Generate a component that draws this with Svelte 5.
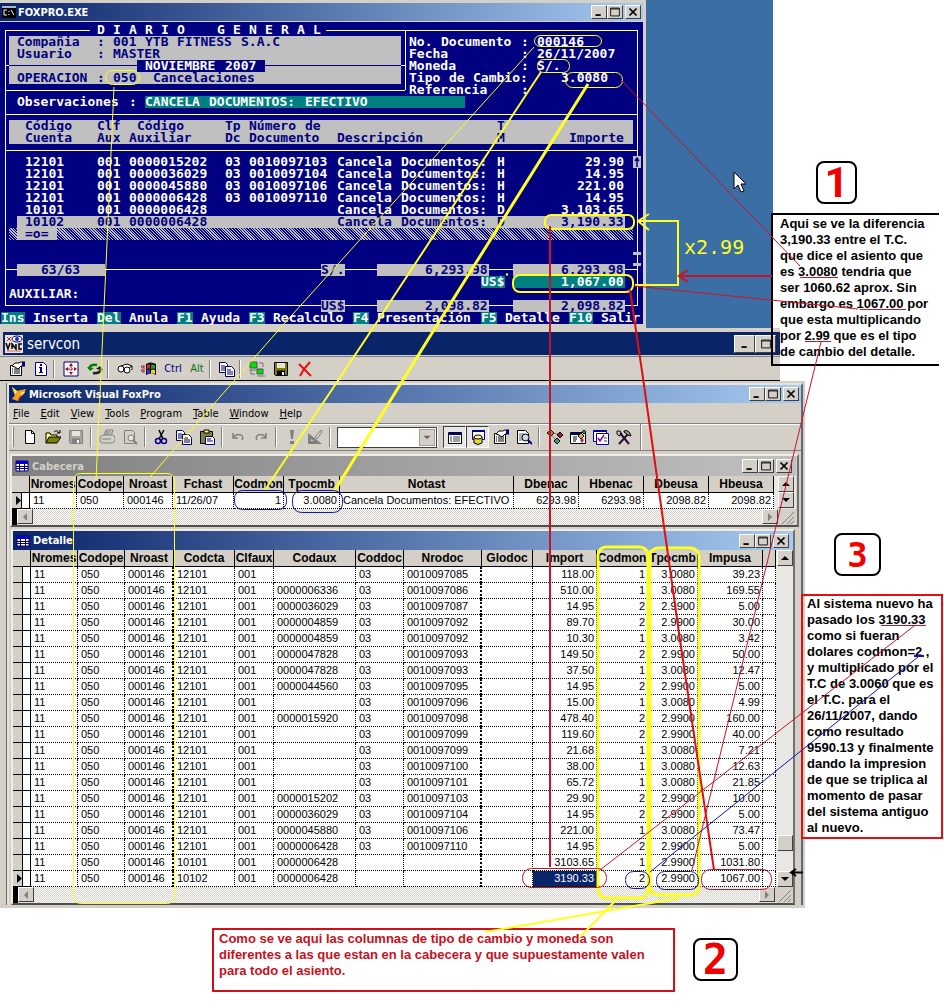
<script>
  // Console screen: an 80 x 25 character grid. Each run is [column, text, tone, width].
  const gray = 'gray';
  const teal = 'teal';
  const entries = [
    ['12101', '0000015202', '0010097103', 'H', '29.90'],
    ['12101', '0000036029', '0010097104', 'H', '14.95'],
    ['12101', '0000045880', '0010097106', 'H', '221.00'],
    ['12101', '0000006428', '0010097110', 'H', '14.95'],
    ['10101', '0000006428', '', 'D', '3,103.65'],
    ['10102', '0000006428', '', 'D', '3,190.33'],
  ];
  const entryRow = ([cuenta, aux, doc, tm, amount], i) => {
    const tone = i === 5 ? 'ink' : '';
    const runs = [];
    if (i === 5) runs.push([2, '', gray, 76]);
    runs.push([3, cuenta, tone], [12, '001', tone], [16, aux, tone]);
    if (doc) runs.push([28, '03', tone], [31, doc, tone]);
    runs.push([42, 'Cancela', tone], [50, 'Documentos:', tone], [62, tm, tone], [78 - amount.length, amount, tone]);
    return runs;
  };
  const spaced = (word, start) => [...word].map((ch, i) => [start + i * 2, ch]);
  const screen = [
    [...spaced('DIARIO', 12), ...spaced('GENERAL', 27)],
    [[1, '', gray, 49], [2, 'Compañia', 'ink'], [12, ':', 'ink'], [14, '001', 'ink'], [18, 'YTB', 'ink'], [22, 'FITNESS', 'ink'], [30, 'S.A.C', 'ink'], [51, 'No.'], [55, 'Documento'], [65, ':'], [67, '000146']],
    [[1, '', gray, 49], [2, 'Usuario', 'ink'], [12, ':', 'ink'], [14, 'MASTER', 'ink'], [51, 'Fecha'], [65, ':'], [67, '26/11/2007']],
    [[1, '', gray, 49], [1, '', 'rule', 49], [17, '', 'navy', 16], [18, 'NOVIEMBRE'], [28, '2007'], [51, 'Moneda'], [65, ':'], [67, 'S/.']],
    [[1, '', gray, 49], [2, 'OPERACION', 'ink'], [12, ':', 'ink'], [14, '050', 'ink'], [19, 'Cancelaciones', 'ink'], [51, 'Tipo'], [56, 'de'], [59, 'Cambio:'], [70, '3.0080']],
    [[51, 'Referencia'], [65, ':']],
    [[2, 'Observaciones'], [16, ':'], [18, '', teal, 40], [18, 'CANCELA'], [26, 'DOCUMENTOS:'], [38, 'EFECTIVO']],
    [],
    [[1, '', gray, 78], [3, 'Código', 'ink'], [12, 'Clf', 'ink'], [17, 'Código', 'ink'], [28, 'Tp', 'ink'], [31, 'Número', 'ink'], [38, 'de', 'ink'], [62, 'T', 'ink']],
    [[1, '', gray, 78], [3, 'Cuenta', 'ink'], [12, 'Aux', 'ink'], [16, 'Auxiliar', 'ink'], [28, 'Dc', 'ink'], [31, 'Documento', 'ink'], [42, 'Descripción', 'ink'], [62, 'M', 'ink'], [71, 'Importe', 'ink']],
    [],
    ...entries.map(entryRow),
    [[1, '', 'hatch', 78], [2, '', gray, 5], [3, '=o=', 'ink']],
    [],
    [],
    [[2, '', gray, 11], [5, '63/63', 'ink'], [40, 'S/.', 'gray ink'], [47, '', gray, 14], [53, '6,293.98', 'ink'], [64, '', gray, 14], [70, '6,293.98', 'ink']],
    [[60, 'US$', teal], [64, '', teal, 14], [70, '1,067.00']],
    [[1, 'AUXILIAR:']],
    [[40, 'US$', 'gray ink'], [47, '', gray, 14], [53, '2,098.82', 'ink'], [64, '', gray, 14], [70, '2,098.82', 'ink']],
    [[0, 'Ins', teal], [4, 'Inserta'], [12, 'Del', teal], [16, 'Anula'], [22, 'F1', teal], [25, 'Ayuda'], [31, 'F3', teal], [34, 'Recalculo'], [44, 'F4', teal], [47, 'Presentación'], [60, 'F5', teal], [63, 'Detalle'], [71, 'F10', teal], [75, 'Salir']],
  ];

  const menus = ['File', 'Edit', 'View', 'Tools', 'Program', 'Table', 'Window', 'Help'];

  const headCols = [18, 47, 47, 49, 61, 50, 56, 174, 65, 65, 65, 65];
  const headNames = ['', 'Nromes', 'Codope', 'Nroast', 'Fchast', 'Codmon', 'Tpocmb', 'Notast', 'Dbenac', 'Hbenac', 'Dbeusa', 'Hbeusa'];
  const headRow = ['11', '050', '000146', '11/26/07', '1', '3.0080', 'Cancela Documentos: EFECTIVO', '6293.98', '6293.98', '2098.82', '2098.82'];
  const headRight = [4, 5, 7, 8, 9, 10];

  const detCols = [18, 47, 47, 49, 61, 39, 82, 48, 78, 51, 64, 51, 50, 65, 13];
  const detNames = ['', 'Nromes', 'Codope', 'Nroast', 'Codcta', 'Clfaux', 'Codaux', 'Coddoc', 'Nrodoc', 'Glodoc', 'Import', 'Codmon', 'Tpocmb', 'Impusa', ''];
  const detail = [
    ['', '7085', '118.00', '1', '39.23'],
    ['0000006336', '7086', '510.00', '1', '169.55'],
    ['0000036029', '7087', '14.95', '2', '5.00'],
    ['0000004859', '7092', '89.70', '2', '30.00'],
    ['0000004859', '7092', '10.30', '1', '3.42'],
    ['0000047828', '7093', '149.50', '2', '50.00'],
    ['0000047828', '7093', '37.50', '1', '12.47'],
    ['0000044560', '7095', '14.95', '2', '5.00'],
    ['', '7096', '15.00', '1', '4.99'],
    ['0000015920', '7098', '478.40', '2', '160.00'],
    ['', '7099', '119.60', '2', '40.00'],
    ['', '7099', '21.68', '1', '7.21'],
    ['', '7100', '38.00', '1', '12.63'],
    ['', '7101', '65.72', '1', '21.85'],
    ['0000015202', '7103', '29.90', '2', '10.00'],
    ['0000036029', '7104', '14.95', '2', '5.00'],
    ['0000045880', '7106', '221.00', '1', '73.47'],
    ['0000006428', '7110', '14.95', '2', '5.00'],
    ['0000006428', '', '3103.65', '1', '1031.80'],
    ['0000006428', '', '3190.33', '2', '1067.00'],
  ].map(([aux, doc, imp, mon, usa], i) => [
    '11', '050', '000146', i === 18 ? '10101' : i === 19 ? '10102' : '12101', '001', aux,
    doc ? '03' : '', doc ? '001009' + doc : '', '', imp, mon,
    mon === '2' || i === 18 ? '2.9900' : '3.0080', usa, '',
  ]);

  const page = '<path d="M3.5 1.500h6l3 3v10h-9z" fill="#fff" stroke="#000"/><path d="M9.500 1.500v3h3" fill="none" stroke="#000"/>';
  const copy = '<path d="M.5 1.500h6l2 2v8h-8z" fill="#fff" stroke="#000060"/><path d="M2 5h4M2 7h4M2 9h4" stroke="#000060"/><path d="M6.500 5.500h6l3 3v7h-9z" fill="#fff" stroke="#000060"/><path d="M8 9h4M8 11h6M8 13h6" stroke="#000060"/>';
  const props = '<path d="M1.500 4.500h11v10h-11z" fill="#fff" stroke="#000"/><path d="M3 8h1M5 8h6M3 10h1M5 10h6M3 12h1M5 12h6" stroke="#000"/><path d="M3 5l3-3h4l2-1h4v4h-4l-3 3-3-2z" fill="#fff" stroke="#000"/><path d="M13 1h3v4h-3z" fill="#000080"/>';
  const disk = (body, ink) => `<path d="M1.500 1.500h13v13h-12l-1-1z" fill="${body}" stroke="${ink}"/><path d="M4 2h8v5h-8z" fill="#e8e4dc"/><path d="M4 9.500h8v5h-8z" fill="${ink}"/><path d="M9 11h2v3h-2z" fill="#fff"/>`;
  const icons = {
    page, copy, props,
    info: '<path d="M2.500 1.500h8l3 3v10h-11z" fill="#fff" stroke="#000080"/><path d="M7 3h2v2h-2zM6 6h3v5h1v1h-4v-1h1v-4h-1z" fill="#000080"/>',
    full: '<path d="M1 1h14v14h-14z" fill="#fff" stroke="#000080"/><path d="M8 2l2 3h-4zM8 14l2-3h-4zM2 8l3-2v4zM14 8l-3-2v4z" fill="#b00020"/><path d="M8 5v6M5 8h6" stroke="#b00020" stroke-dasharray="2 1"/>',
    refresh: '<path d="M2 8q1-5 8-4" fill="none" stroke="#008000" stroke-width="2.500"/><path d="M0 6l3 4 4-3z" fill="#008000"/><path d="M14 8q-1 5-8 4" fill="none" stroke="#202020" stroke-width="2.500"/><path d="M16 9l-3-4-4 3z" fill="#003000"/>',
    view: '<g fill="#fff" stroke="#000"><path d="M4 5l6-2 5 2v4"/><ellipse cx="4" cy="8" rx="3" ry="3"/><ellipse cx="10" cy="9" rx="3" ry="3"/><path d="M6 8l2 1M12 7l3-2"/></g>',
    win: '<path d="M5 3q4-3 10 0v11q-5-3-10 0z" fill="#000"/><path d="M6 4q2-2 3 0v4q-1-1-3 0z" fill="#e02020"/><path d="M10 4q2-1 4 0v4q-2-1-4 0z" fill="#20a020"/><path d="M6 9q2-1 3 0v4q-1-1-3 0z" fill="#2040e0"/><path d="M10 9q2-1 4 0v4q-2-1-4 0z" fill="#f0d020"/><path d="M0 5h4M1 7h3M0 9h4M1 11h3" stroke="#c02020"/><path d="M0 6h4M0 10h4" stroke="#2020a0" stroke-dasharray="1 1"/>',
    net: '<path d="M1 1h7v6h-7zM8 8h6v5h-6z" fill="#00e000" stroke="#505050"/><path d="M10 2h4v4M2 9v4h4M8 15h8M0 9h8" fill="none" stroke="#707070"/>',
    disk: disk('#808000', '#000'),
    diskOff: disk('#a8a49c', '#808080'),
    close: '<path d="M2 3l5 5 7 7M13 1l-6 7-4 7" fill="none" stroke="#e81010" stroke-width="2"/>',
    open: '<path d="M1 14v-10h4l1 2h6v3" fill="#ffff80" stroke="#000"/><path d="M1 14l3-6h12l-4 6z" fill="#808000" stroke="#000"/><path d="M9 3q3-3 5 1M15 1v3h-3" fill="none" stroke="#000"/>',
    print: '<g fill="#d4d0c8" stroke="#808080"><path d="M5 7l2-6h7l-2 6z"/><path d="M1 8l3-2h10l2 2v4l-3 2h-10l-2-2z"/><path d="M3 10h9M7 3h5M6 5h5"/></g>',
    preview: '<g fill="none" stroke="#808080"><path d="M2.500 1.500h8l2 2v11h-10z"/><circle cx="9" cy="9" r="3" fill="#e8e4dc"/><path d="M11 11l4 4" stroke-width="2"/></g>',
    find: '<path d="M1.500 1.500h8l3 3v10h-11z" fill="#fff" stroke="#000"/><path d="M3 5h5M3 7h3M3 9h3M3 11h3" stroke="#606060"/><circle cx="9.500" cy="8.500" r="3.500" fill="#c8dce8" stroke="#000"/><path d="M12 11l4 4" stroke="#000080" stroke-width="2"/>',
    cut: '<path d="M6 1l4 9M11 1l-5 9" stroke="#000" fill="none" stroke-width="1.500"/><circle cx="5" cy="12" r="2.500" fill="none" stroke="#000080" stroke-width="1.500"/><circle cx="11" cy="12" r="2.500" fill="none" stroke="#000080" stroke-width="1.500"/>',
    paste: '<path d="M1.500 2.500h12v12h-12z" fill="#808040" stroke="#000"/><path d="M5 1h5v3h-5z" fill="#ffff60" stroke="#000"/><path d="M6.500 7.500h7l2 2v6h-9z" fill="#fff" stroke="#000080"/><path d="M8 10h4M8 12h6" stroke="#000080"/>',
    undo: '<path d="M3 4v5h5M3 9q3-5 8-3 3 2 1 5" fill="none" stroke="#808080" stroke-width="1.500"/>',
    redo: '<path d="M13 4v5h-5M13 9q-3-5-8-3-3 2-1 5" fill="none" stroke="#808080" stroke-width="1.500"/>',
    run: '<path d="M6 1h4l-1 9h-2zM6 12h4v3h-4z" fill="#808080"/>',
    modify: '<path d="M1 4v11h14zM4 10v2h3z" fill="#808080" fill-rule="evenodd"/><path d="M8 8l6-7 1 2-5 7z" fill="#d4d0c8" stroke="#808080"/>',
    form: '<path d="M1.500 3.500h13v11h-13z" fill="#fff" stroke="#000"/><path d="M1 4h14v2h-14z" fill="#000080"/><path d="M3 8h2M6 8h7M3 10h2M6 10h7M3 12h2M6 12h7" stroke="#404040"/>',
    data: '<path d="M2.500 1.500h12v9h-12z" fill="#fff" stroke="#000080"/><path d="M2 1h13v2h-13z" fill="#000080"/><path d="M4 8v6q4 3 8 0v-6z" fill="#e0d840" stroke="#000"/><ellipse cx="8" cy="8" rx="4" ry="2" fill="#ffff90" stroke="#000"/>',
    tree: '<path d="M4 4l8 1M4 5l6 8" stroke="#808080"/><path d="M4 1l3 3-3 3-4-3z" fill="#d08020" stroke="#000"/><path d="M13 3l3 3-3 3-3-3z" fill="#a01040" stroke="#000"/><path d="M10 9l3 3-3 3-3-3z" fill="#30a090" stroke="#000"/>',
    wizard: '<path d="M.5 3.500h15v11h-15z" fill="#fff" stroke="#000"/><path d="M1 4h9v2h-9z" fill="#000080"/><path d="M3 8h4M3 10h4M3 12h3" stroke="#000"/><path d="M8 7l3-3 3 3-3 3z" fill="#e0b030" stroke="#000"/><path d="M12 3l2-2 2 2-2 2z" fill="#30a090" stroke="#000"/><path d="M12 9l2 2-2 3-2-3z" fill="#c02040"/>',
    tasks: '<path d="M.5 1.500h13v11h-13z" fill="#fff" stroke="#0000a0"/><path d="M3.500 4.500h12v11h-12z" fill="#fff" stroke="#0000a0"/><path d="M1 1h13v2h-13z" fill="#0000a0"/><path d="M5 9l2 3 4-6" fill="none" stroke="#8000a0" stroke-width="1.500"/><path d="M11 9h3M11 12h3" stroke="#404040"/>',
    tools: '<path d="M3 15l9-10M4 4l9 11" stroke="#301030" stroke-width="2"/><path d="M1 2h3l2 3-3 2-2-2z" fill="none" stroke="#000"/><path d="M8 2q5-2 7 5l-3-1-4-3z" fill="#a09890" stroke="#000"/>',
    cross: '<path d="M4 4l8 8M12 4l-8 8" stroke="#000" stroke-width="2"/>',
    box: '<path d="M3 3.500h10v9h-10z" fill="none" stroke="#000"/><path d="M3 4.500h10" stroke="#000"/>',
    min: '<path d="M4 11.500h6" stroke="#000" stroke-width="2"/>',
    up: '<path d="M4 10h8l-4-4z" fill="#000"/>',
    down: '<path d="M4 6h8l-4 4z" fill="#000"/>',
    left: '<path d="M10 4v8l-4-4z" fill="#808080"/>',
    right: '<path d="M6 4v8l4-4z" fill="#808080"/>',
    grid: '<path d="M2 3h12v10h-12z" fill="#fff" stroke="#000080"/><path d="M2 3h12v3h-12z" fill="#0000d0"/><path d="M2 8.500h12M2 10.500h12M5.500 6v7M10.500 6v7" stroke="#000080"/>',
    fox: '<path d="M1 1l5 4 9-2-2 5-3 2-3 5-6-2 3-4z" fill="#f8a020"/><path d="M1 1l5 4-2 4zM10 10l4-4-4 0z" fill="#ffe060"/><path d="M7 15l1-4 3-1z" fill="#b03810"/>',
  };

  const vncTools = [['props', 'Properties'], ['info', 'Info'], null, ['full', 'Full screen'], ['refresh', 'Refresh'], null, ['view', 'View'], ['win', 'Start'], ['Ctrl'], ['Alt'], null, ['copy', 'Copy'], null, ['net', 'Connection'], ['disk', 'Save'], ['close', 'Close connection']];
  const foxTools = ['page', 'open', 'diskOff', null, 'print', 'preview', null, 'cut', 'copy', 'paste', null, 'undo', 'redo', null, 'run', 'modify', null];
  const foxTools2 = ['form', 'data', 'props', 'find', null, 'tree', 'wizard', 'tasks', 'tools'];

  const note1 = ['Aqui se ve la diferencia', '3,190.33 entre el T.C.', 'que dice el asiento que', 'es 3.0080 tendria que', 'ser 1060.62 aprox. Sin', 'embargo es 1067.00 por', 'que esta multiplicando', 'por 2.99 que es el tipo', 'de cambio del detalle.'];
  const note2 = ['Como se ve aqui las columnas de tipo de cambio y moneda son', 'diferentes a las que estan en la cabecera y que supuestamente valen', 'para todo el asiento.'];
  const note3 = ['Al sistema nuevo ha', 'pasado los 3190.33', 'como si fueran', 'dolares codmon=2 ,', 'y multiplicado por el', 'T.C de 3.0060 que es', 'el T.C. para el', '26/11/2007, dando', 'como resultado', '9590.13 y finalmente', 'dando la impresion', 'de que se triplica al', 'momento de pasar', 'del sistema antiguo', 'al nuevo.'];
</script>

{#snippet icon(name)}
  <svg class="icon" viewBox="0 0 16 16" aria-hidden="true">{@html icons[name]}</svg>
{/snippet}

{#snippet winButtons()}
  <span class="winbtns">
    <button aria-label="Minimize">{@render icon('min')}</button>
    <button aria-label="Maximize">{@render icon('box')}</button>
    <button class="apart" aria-label="Close">{@render icon('cross')}</button>
  </span>
{/snippet}

{#snippet marker()}
  <svg class="marker" viewBox="0 0 5 9" aria-hidden="true"><path d="M0 0l5 4.500L0 9z" fill="#000" /></svg>
{/snippet}

{#snippet hscroll()}
  <div class="hscroll">
    <i class="split"></i>
    <button aria-label="Scroll left">{@render icon('left')}</button>
    <span class="track"></span>
    <button aria-label="Scroll right">{@render icon('right')}</button>
    <svg class="grip" viewBox="0 0 16 16" aria-hidden="true"><path d="M3 15L15 3M8 15L15 8M12 15l3-3" stroke="#808080" /></svg>
  </div>
{/snippet}

<main class="board">
  <div class="desktop"></div>

  <section class="dos">
    <header class="bar">
      <svg class="cmd" viewBox="0 0 14 12" aria-hidden="true"><path d="M0 0h14v12H0z" fill="#000" /><path d="M0 0h14v2H0z" fill="#a6b8d8" /><path d="M5 4H2v5h3M7 5v1M7 8v1M9 4l3 5" fill="none" stroke="#fff" /></svg>
      <span>FOXPRO.EXE</span>
      {@render winButtons()}
    </header>
    <div class="console">
      <svg class="frame" viewBox="0 0 645 301" shape-rendering="crispEdges" aria-hidden="true">
        <path d="M90 6H5V281H637V6H326M5 66H405M405 6V66M5 90H637M5 126H637M5 245H637M5 41H9M401 41H405" fill="none" stroke="#fff" stroke-width="1" />
      </svg>
      {#each screen as runs}
        <div class="line">
          {#each runs as [c, text, tone = '', w]}
            <span class={tone} style="grid-column: {c + 1} / span {w ?? text.length}">{text}</span>
          {/each}
        </div>
      {/each}
      <svg class="scrollmarks" viewBox="0 0 9 120" aria-hidden="true">
        <path d="M0 0h8v12H0zM0 96h8v3H0zM0 107h8v3H0z" fill="#c0c0c0" />
        <path d="M4 11V2M2 5l2-3 2 3" fill="none" stroke="#000080" stroke-width="1.500" />
      </svg>
    </div>
  </section>

  <section class="vnc">
    <header class="vnctitle">
      <svg class="vnclogo" viewBox="0 0 18 18" aria-hidden="true"><path d="M0 0h18v18H0z" fill="#e8e4e0" /><ellipse cx="12" cy="4" rx="5" ry="3" fill="#fff" stroke="#000060" /><circle cx="12" cy="4" r="2" fill="#2020c0" /><path d="M2 2l4 4M6 2L2 6" stroke="#c02020" /><path d="M1 8l2 6 2-6M7 14V9l4 5V9M17 9h-3v5h3" fill="none" stroke="#000" stroke-width="1.500" /><path d="M2 16h14" stroke="#e06060" /></svg>
      <span>servcon</span>
      <span class="winbtns big">
        <button aria-label="Minimize">{@render icon('min')}</button>
        <button aria-label="Maximize">{@render icon('box')}</button>
      </span>
    </header>
    <div class="vnctools">
      {#each vncTools as t}
        {#if !t}<i class="sep"></i>
        {:else if t.length === 1}<button class="word {t[0]}">{t[0]}</button>
        {:else}<button aria-label={t[1]}>{@render icon(t[0])}</button>{/if}
      {/each}
    </div>
    <div class="vncbody">
      <div class="fox">
        <header class="bar">
          {@render icon('fox')}
          <span>Microsoft Visual FoxPro</span>
          {@render winButtons()}
        </header>
        <nav>
          {#each menus as m}<button><u>{m[0]}</u>{m.slice(1)}</button>{/each}
        </nav>
        <div class="foxtools">
          <i class="handle"></i>
          {#each foxTools as t}
            {#if t}<button aria-label={t}>{@render icon(t)}</button>{:else}<i class="sep"></i>{/if}
          {/each}
          <span class="combo">
            <select aria-label="Database"><option></option></select>
            <i>{@render icon('down')}</i>
          </span>
          <i class="gap"></i>
          {#each foxTools2 as t, i}
            {#if t}<button class:on={i < 2} aria-label={t}>{@render icon(t)}</button>{:else}<i class="sep"></i>{/if}
          {/each}
          <i class="endsep"></i>
        </div>
        <div class="mdi">
          <section class="child cab">
            <header class="bar idle">{@render icon('grid')}<span>Cabecera</span>{@render winButtons()}</header>
            <div class="pane">
              <table>
                <colgroup>{#each headCols as w}<col style="width: {w}px" />{/each}</colgroup>
                <thead><tr>{#each headNames as n}<th>{n}</th>{/each}</tr></thead>
                <tbody>
                  <tr><td class="mark">{@render marker()}</td>{#each headRow as v, i}<td class:num={headRight.includes(i)}>{v}</td>{/each}</tr>
                </tbody>
              </table>
              <div class="vscroll">
                <button aria-label="Scroll up">{@render icon('up')}</button>
                <button aria-label="Scroll down">{@render icon('down')}</button>
              </div>
            </div>
            {@render hscroll()}
          </section>

          <section class="child det">
            <header class="bar">{@render icon('grid')}<span>Detalle</span>{@render winButtons()}</header>
            <div class="pane">
              <table>
                <colgroup>{#each detCols as w}<col style="width: {w}px" />{/each}</colgroup>
                <thead><tr>{#each detNames as n}<th>{n}</th>{/each}</tr></thead>
                <tbody>
                  {#each detail as row, r}
                    <tr>
                      <td class="mark">{#if r === 19}{@render marker()}{/if}</td>
                      {#each row as v, i}<td class:num={i > 8} class:sel={r === 19 && i === 9} class:twin={i === 2 || i === 7}>{v}</td>{/each}
                    </tr>
                  {/each}
                </tbody>
              </table>
              <div class="vscroll">
                <button aria-label="Scroll up">{@render icon('up')}</button>
                <i class="run"></i>
                <i class="thumb"></i>
                <i class="rest"></i>
                <button aria-label="Scroll down">{@render icon('down')}</button>
              </div>
            </div>
            {@render hscroll()}
          </section>
        </div>
      </div>
    </div>
  </section>

  <aside class="note n1">{#each note1 as l}<div>{l}</div>{/each}</aside>
  <aside class="note n2">{#each note2 as l}<div>{l}</div>{/each}</aside>
  <aside class="note n3">{#each note3 as l}<div>{l}</div>{/each}</aside>
  <b class="badge b1">1</b>
  <b class="badge b2">2</b>
  <b class="badge b3">3</b>
  <span class="factor">x2.99</span>

  <svg class="marks" width="944" height="1006" viewBox="0 0 944 1006" fill="none" aria-hidden="true">
    <g stroke="#ffff20">
      <rect x="105.500" y="70.500" width="34" height="14" rx="7" />
      <path d="M114 87L106 265L96 480" />
      <rect x="534.500" y="35.500" width="67" height="11" rx="6" />
      <path d="M534 47L283 325L150 477" />
      <rect x="537.500" y="59.500" width="32" height="13" rx="6" />
      <path d="M541 72L375 325L265 490" stroke-width="2" />
      <rect x="565.500" y="72.500" width="57" height="15" rx="7" />
      <path d="M588 84L437 325L335 490" stroke-width="3" />
      <rect x="73.500" y="473.500" width="101" height="430" rx="7" />
      <g stroke-width="2">
        <rect x="545" y="215" width="89" height="14" rx="6" />
        <rect x="513" y="275" width="120" height="17" rx="7" />
        <path d="M638 221H678V285H635M649 214L638 221L649 230" />
        <path d="M485 932L680 898M580 937L616 900" />
        <path d="M506 274l2 1" />
      </g>
      <rect x="598" y="547" width="50" height="351" rx="8" stroke-width="3" />
      <rect x="650" y="548" width="49" height="347" rx="8" stroke-width="3" />
    </g>
    <g stroke="#c81428">
      <path d="M621 80L800 266M634 286L858 309M821 342L692 870M600 870L914 626" />
      <path d="M800 277.500h38M860 309.500h46M805 341.500h26M881 625.500h45" />
      <rect x="522.500" y="868.500" width="84" height="19" rx="9" />
      <rect x="701.500" y="869.500" width="70" height="20" rx="9" />
      <path d="M550 226V867M772 276H680M688 270L679 276L688 282" stroke-width="2" />
      <path d="M630 290L643 378L680 640L714 870" stroke="#e01010" stroke-width="2" />
    </g>
    <g stroke="#1414b4">
      <rect x="234.500" y="490.500" width="52" height="19" rx="8" />
      <rect x="292.500" y="490.500" width="50" height="22" rx="9" />
      <rect x="625.500" y="871.500" width="24" height="17" rx="8" />
      <rect x="656.500" y="871.500" width="42" height="18" rx="8" />
      <path d="M650 872L918 657" />
      <path d="M914 656h10" stroke-width="2" />
    </g>
    <path d="M803 872.500H792M796 869l-5 3.500 5 3.500" stroke="#000" stroke-width="2" />
    <path d="M734 172v17l4-4 3 7 3-1-3-7h5z" fill="#fff" stroke="#000" />
  </svg>
</main>

<style>
  :global(body) { background: #fff; }
  * { box-sizing: border-box; }
  .board {
    position: relative;
    min-height: 1006px;
    overflow: hidden;
    font-family: "Liberation Sans", Arial, sans-serif;
    font-size: 11px;
    color: #000;
  }
  button { margin: 0; padding: 0; border: 0; background: none; font: inherit; color: inherit; display: flex; align-items: center; justify-content: center; }
  .icon { width: 16px; height: 16px; display: block; flex: none; }
  .desktop { position: absolute; left: 645px; top: 0; width: 128px; height: 328px; background: #3a6ea5; }

  .bar {
    display: flex;
    align-items: center;
    gap: 2px;
    height: 18px;
    padding: 0 2px 0 2px;
    color: #fff;
    font: bold 11px "DejaVu Sans Condensed", "DejaVu Sans", sans-serif;
    background: linear-gradient(90deg, #0a246a, #a6caf0);
  }
  .bar.idle { background: linear-gradient(90deg, #808080, #c0c0c0); color: #d4d0c8; }
  .winbtns { display: flex; margin-left: auto; }
  .winbtns button, .vscroll button, .hscroll button, .thumb {
    width: 16px;
    height: 14px;
    background: #d4d0c8;
    border: 1px solid;
    border-color: #fff #404040 #404040 #fff;
    overflow: hidden;
  }
  .winbtns .apart { margin-left: 2px; }
  .winbtns .icon { width: 14px; height: 14px; }
  .winbtns.big button { width: 21px; height: 18px; }

  .dos {
    position: absolute;
    left: 0;
    top: 0;
    width: 646px;
    background: #000080;
    border-top: 3px solid #d4d0c8;
    border-right: 3px solid #d4d0c8;
    border-bottom: 4px solid #d4d0c8;
  }
  .dos .bar { height: 19px; border-bottom: 1px solid #d4d0c8; }
  .cmd { width: 14px; height: 12px; }
  .console {
    position: relative;
    padding: 2px 0 0 1px;
    font: bold 13px/12px "DejaVu Sans Mono", monospace;
    color: #fff;
  }
  .frame { position: absolute; left: 0; top: 2px; width: 645px; height: 301px; }
  .scrollmarks { position: absolute; left: 633px; top: 134px; width: 9px; height: 120px; }
  .line { position: relative; display: grid; grid-template-columns: repeat(80, 8px); height: 12px; }
  .line span { grid-row: 1; white-space: nowrap; height: 12px; }
  .gray { background: #c0c0c0; }
  .teal { background: #008080; }
  .navy { background: #000080; }
  .ink { color: #000080; }
  .rule { background: linear-gradient(#000080, #000080) 0 5px / 100% 1px no-repeat; }
  .hatch { background: repeating-linear-gradient(45deg, #000080 0 1px, #c0c0c0 1px 2px); }

  .vnc { position: absolute; left: 0; top: 328px; width: 805px; }
  .vnctitle {
    display: flex;
    align-items: center;
    gap: 4px;
    width: 780px;
    height: 28px;
    padding: 0 4px 0 2px;
    border: 3px solid #d4d0c8;
    border-right: 0;
    border-top-width: 4px;
    border-bottom-width: 1px;
    background: #0a246a;
    color: #fff;
    font: 15px "DejaVu Sans Condensed", "DejaVu Sans", sans-serif;
  }
  .vnclogo { width: 18px; height: 18px; }
  .vnctools {
    display: flex;
    align-items: center;
    width: 780px;
    height: 25px;
    padding-left: 5px;
    background: #d4d0c8;
    border-top: 1px solid #808080;
    border-bottom: 1px solid #000;
  }
  .vnctools button { width: 24px; height: 20px; }
  .vnctools .sep { width: 6px; height: 18px; border-left: 1px solid #808080; border-right: 0; box-shadow: inset 1px 0 #fff; }
  .word { font: 12px "DejaVu Sans Condensed", "DejaVu Sans", sans-serif; }
  .vnctools .word { font-size: 11px; }
  .word.Ctrl { color: #000080; }
  .word.Alt { color: #107010; }
  .vncbody { padding: 2px 4px 3px 4px; background: #d4d0c8; border-left: 3px solid #d4d0c8; width: 805px; }
  .fox { border: 2px solid #e8e4dc; border-right: 2px solid #606878; border-bottom: 0; width: 796px; box-shadow: -1px 0 #606878; }
  .fox > .bar { height: 18px; }
  nav { display: flex; gap: 11px; height: 20px; padding-left: 4px; align-items: center; font: 11px "DejaVu Sans Condensed", "DejaVu Sans", sans-serif; }
  nav button { display: block; }
  .foxtools { display: flex; align-items: center; height: 28px; padding-left: 3px; border-top: 1px solid #808080; border-bottom: 1px solid #808080; box-shadow: inset 0 1px #fff; }
  .foxtools button { width: 23px; height: 22px; }
  .foxtools .sep { width: 8px; height: 20px; background: linear-gradient(90deg, #808080 50%, #fff 50%) 3px 0 / 2px 100% no-repeat; }
  .foxtools .on { border: 1px solid; border-color: #404040 #fff #fff #404040; background: #e8e6e2; }
  .handle { width: 6px; height: 20px; border-left: 1px solid #fff; border-right: 0; box-shadow: inset 1px 0 #808080; }
  .combo { position: relative; width: 100px; height: 21px; margin-left: 3px; }
  .combo select { appearance: none; width: 100%; height: 100%; border: 1px solid #404040; background: #fff; border-radius: 0; }
  .combo i { position: absolute; right: 2px; top: 2px; width: 16px; height: 17px; background: #d4d0c8; border: 1px solid #a0a098; }
  .combo .icon { width: 14px; height: 15px; opacity: 0.5; }
  .gap { width: 6px; height: 20px; border-left: 1px solid #fff; }
  .endsep { width: 2px; height: 26px; margin-left: 5px; background: #808080; border-right: 1px solid #fff; }
  .mdi { padding: 3px 0 0; background: #d4d0c8; }
  .child { background: #d4d0c8; border: 2px solid #f0ece4; border-right-color: #707070; border-bottom-color: #505050; }
  .cab { width: 789px; margin-left: 1px; padding-right: 1px; }
  .det { width: 784px; margin: 2px 0 0 2px; }
  .cab .bar { height: 20px; padding-right: 4px; }
  .det .bar { height: 19px; padding-right: 4px; }
  .pane { display: flex; background: #e9e7e3; justify-content: space-between; }
  table { table-layout: fixed; width: 0; border-collapse: separate; border-spacing: 0; flex: none; line-height: 15px; background: #fff; }
  th { height: 17px; padding: 0; background: #d4d0c8; border-right: 1px solid #000; border-bottom: 1px solid #000; font-size: 12px; font-weight: bold; line-height: 16px; overflow: hidden; white-space: nowrap; }
  td { height: 16px; padding: 0 2px 0 3px; border-right: 1px dotted #000; border-bottom: 1px dotted #000; white-space: nowrap; overflow: hidden; }
  .num { text-align: right; }
  td.sel { background: #0a246a; color: #fff; }
  td.twin { border-right-width: 2px; }
  .mark { background: linear-gradient(90deg, #d4d0c8 9px, #000 9px 10px, #fff 10px); border-right: 1px solid #000; border-bottom: 1px solid #000; padding: 0; }
  .marker { display: block; width: 5px; height: 9px; margin-left: 4px; }
  .vscroll { display: flex; flex-direction: column; width: 16px; }
  .cab .vscroll { margin-right: 2px; }
  .vscroll button { height: 16px; }
  .run { flex: 1; }
  .thumb { height: 16px; }
  .rest { height: 20px; }
  .hscroll { display: flex; height: 16px; background: #e4e1dc; }
  .hscroll button { width: 16px; height: 15px; }
  .split { width: 5px; background: #000; }
  .track { flex: 1; background: repeating-conic-gradient(#fff 0 25%, #d4d0c8 0 50%) 0 0 / 2px 2px; }
  .grip { width: 18px; height: 16px; background: #d4d0c8; }

  .note { position: absolute; font-weight: bold; font-size: 13px; line-height: 16px; white-space: nowrap; }
  .n1 { left: 771px; top: 213px; width: 168px; padding: 1px 0 4px 7px; border: 2px solid #000; border-right: 0; }
  .n2 { left: 212px; top: 928px; width: 463px; padding: 1px 5px 11px; border: 2px solid #d01018; color: #c8101c; }
  .n3 { left: 801px; top: 594px; width: 142px; padding: 0 0 1px 4px; border: 2px solid #e01010; }
  .badge {
    position: absolute;
    display: flex;
    align-items: center;
    justify-content: center;
    height: 43px;
    border: 2px solid #000;
    border-radius: 8px;
    background: #fff;
    color: #f00000;
    font: 42px "DejaVu Sans Mono", monospace;
    font-weight: bold;
  }
  .b1 { left: 816px; top: 161px; width: 41px; font-family: Roboto, sans-serif; }
  .b2 { left: 693px; top: 938px; width: 45px; }
  .b3 { left: 834px; top: 533px; width: 47px; font-size: 34px; }
  .factor { position: absolute; left: 684px; top: 235px; color: #ffff20; font: 20px "DejaVu Sans Mono", monospace; }
  .marks { position: absolute; left: 0; top: 0; pointer-events: none; }
</style>
